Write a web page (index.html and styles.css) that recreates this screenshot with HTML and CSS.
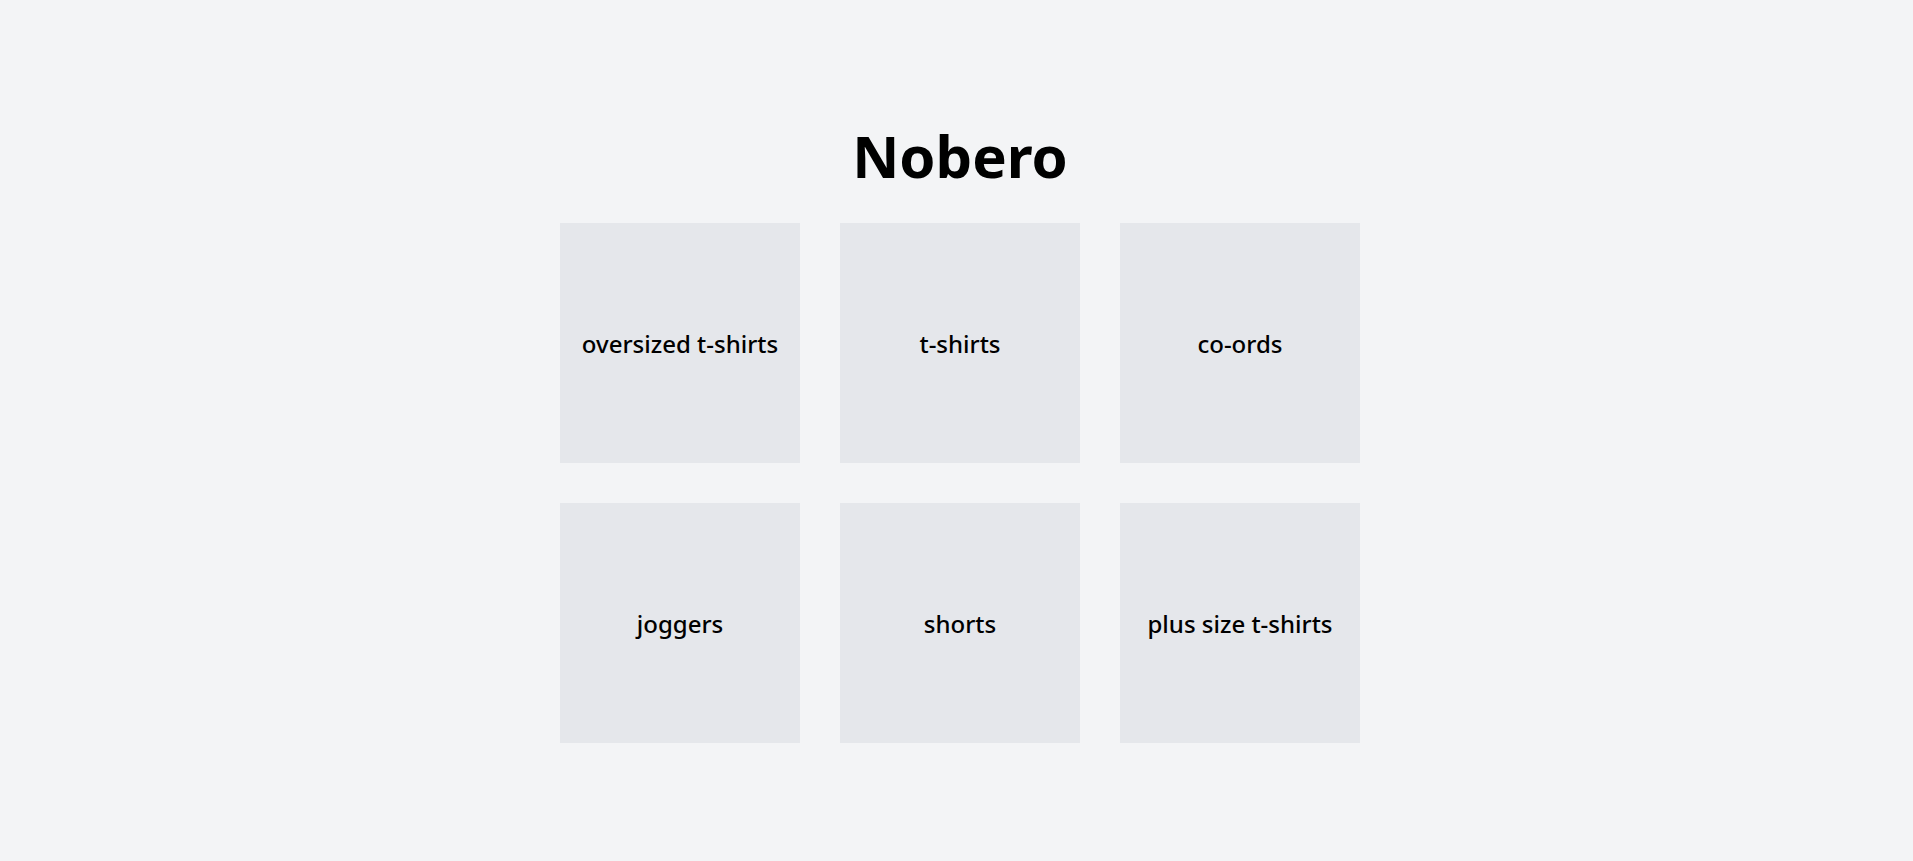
FILE: index.html
```html
<!DOCTYPE html>
<html lang="en">
<head>
<meta charset="utf-8">
<meta name="viewport" content="width=device-width, initial-scale=1">
<title>Nobero</title>
<link rel="stylesheet" href="styles.css">
</head>
<body>
<main class="page">
  <h1 class="title">Nobero</h1>
  <nav class="categories" aria-label="Categories">
    <a class="category" href="#oversized-t-shirts">oversized t-shirts</a>
    <a class="category" href="#t-shirts">t-shirts</a>
    <a class="category" href="#co-ords">co-ords</a>
    <a class="category" href="#joggers">joggers</a>
    <a class="category" href="#shorts">shorts</a>
    <a class="category" href="#plus-size-t-shirts">plus size t-shirts</a>
  </nav>
</main>
</body>
</html>
```
FILE: styles.css
```css
* {
  box-sizing: border-box;
}

body {
  margin: 0;
  background: #f3f4f6;
  color: #000;
  font-family: "Segoe UI", "Noto Sans", sans-serif;
}

.page {
  display: flex;
  flex-direction: column;
  align-items: center;
  justify-content: center;
  gap: 34px;
  min-height: 100vh;
  padding: 5px 0 0 7px;
}

.title {
  margin: 0;
  font-size: 58px;
  line-height: 66px;
  font-weight: 700;
}

.categories {
  display: grid;
  grid-template-columns: repeat(3, 240px);
  gap: 40px;
}

.category {
  display: flex;
  align-items: center;
  justify-content: center;
  aspect-ratio: 1;
  padding-top: 2px;
  background: #e5e7eb;
  color: inherit;
  font-size: 24px;
  line-height: 32px;
  font-weight: 500;
  text-decoration: none;
}
```
